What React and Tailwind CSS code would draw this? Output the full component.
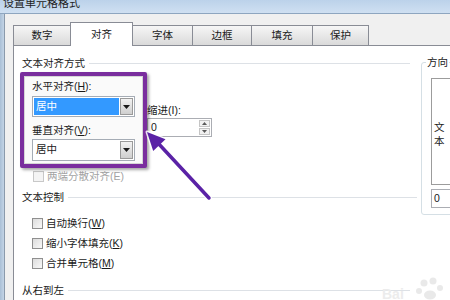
import React from 'react';

const FONT = "font-['Liberation_Sans','Noto_Sans_CJK_SC',sans-serif]";

const tabs = [
  { label: '数字', w: 'w-[57px]' },
  { label: '对齐', w: 'w-[63px]', active: true },
  { label: '字体', w: 'w-[59px]', noLeft: true },
  { label: '边框', w: 'w-[59px]' },
  { label: '填充', w: 'w-[61px]' },
  { label: '保护', w: 'w-[57px]', last: true },
];

function DownTri() {
  return (
    <svg width="7" height="4" viewBox="0 0 7 4">
      <path d="M0 0H7L3.5 4Z" fill="#1a1a1a" />
    </svg>
  );
}

function SpinTri({ up }) {
  return (
    <svg width="5" height="3" viewBox="0 0 5 3">
      <path d={up ? 'M0 3L2.5 0L5 3Z' : 'M0 0H5L2.5 3Z'} fill="#5a5a5a" />
    </svg>
  );
}

function Combo({ selected, className }) {
  return (
    <div className={`flex w-[103px] border border-[#a5acb5] bg-white p-[1px] ${className}`}>
      <div className={`flex flex-1 items-center pl-[2px] ${selected ? 'bg-[#3399ff] text-white' : 'text-[#1a1a1a]'}`}>居中</div>
      <div className="ml-[1px] flex w-[13px] items-center justify-center border border-[#9a9a9a] bg-linear-to-b from-[#f2f2f2] to-[#cfcfcf]">
        <DownTri />
      </div>
    </div>
  );
}

function Header({ text, className }) {
  return (
    <div className={`flex h-[14px] items-center leading-[14px] text-[#1a1a1a] ${className}`}>
      <span>{text}</span>
      <div className="ml-[4px] flex-1 border-t border-[#dde1e6]" />
    </div>
  );
}

function Check({ children, disabled, className }) {
  return (
    <div className={`ml-[10px] flex h-[14px] items-center gap-[3px] leading-[14px] ${className}`}>
      <div className={`h-[11px] w-[11px] border ${disabled ? 'border-[#c8c8c8] bg-[#f4f4f4]' : 'border-[#8f8f8f] bg-linear-to-br from-[#dcdcdc] to-[#f8f8f8]'}`} />
      <span className={disabled ? 'text-[#a3a3a3]' : 'text-[#1a1a1a]'}>{children}</span>
    </div>
  );
}

export default function App() {
  return (
    <div className={`relative flex h-[300px] w-[450px] flex-col overflow-hidden bg-[#f0f0f0] text-[10.5px] ${FONT}`}>
      {/* title bar */}
      <div className="h-[14px] shrink-0 overflow-hidden border-b border-[#8ea6c0] bg-linear-to-b from-[#bcd2ea] to-[#cfe0f2]">
        <div className="-mt-[3px] pl-[3px] text-[11px] leading-[12px] text-[#222]">设置单元格格式</div>
      </div>

      <div className="flex flex-1">
        <div className="w-[5px] shrink-0 border-r border-[#8a9aac] bg-linear-to-r from-[#a9bfd6] to-[#c3d4e6]" />

        <div className="flex min-w-0 flex-1 flex-col pl-[8px]">
          {/* tabs */}
          <div className="mt-[8px] flex h-[23px] shrink-0 items-end">
            {tabs.map((t) => (
              <div
                key={t.label}
                className={`flex shrink-0 items-center justify-center border-[#898c95] text-[#1a1a1a] ${t.w} ${
                  t.active
                    ? 'relative z-10 -mb-[1px] h-[24px] border-x border-t bg-white'
                    : `h-[20px] border-t bg-linear-to-b from-[#f6f6f6] to-[#dadada] ${t.noLeft ? '' : 'border-l'} ${t.last ? 'border-r' : ''}`
                }`}
              >
                {t.label}
              </div>
            ))}
          </div>

          {/* panel */}
          <div className="flex flex-1 border-l border-t border-[#898c95] bg-white">
            <div className="w-[407px] shrink-0 pl-[8px]">
              <Header text="文本对齐方式" className="mt-[10px] mr-[11px]" />

              <div className="mt-[2px] flex items-start">
                <div className="relative z-10 -ml-[2px] h-[96px] w-[127px] shrink-0 rounded-[2px] border-[4px] border-[#7a2e9e] bg-[#fafafa] pl-[8px] shadow-[inset_0_0_0_1px_#d6d6d6,2px_2px_3px_rgba(0,0,0,0.35)]">
                  <div className="mt-[3px] h-[14px] leading-[14px] text-[#1a1a1a]">
                    水平对齐(<span className="underline">H</span>):
                  </div>
                  <Combo selected className="mt-[3px] h-[21px]" />
                  <div className="mt-[6px] h-[14px] leading-[14px] text-[#1a1a1a]">
                    垂直对齐(<span className="underline">V</span>):
                  </div>
                  <Combo className="mt-[2px] h-[22px]" />
                </div>

                <div className="mt-[31px] flex flex-col">
                  <div className="h-[14px] leading-[14px] text-[#1a1a1a]">缩进(I):</div>
                  <div className="mt-[1px] flex h-[19px] w-[65px] items-center border border-[#abadb3] bg-white pl-[3px] pr-[1px]">
                    <span className="flex-1 text-[#1a1a1a]">0</span>
                    <div className="flex h-[15px] w-[11px] flex-col gap-[1px]">
                      <div className="flex flex-1 items-center justify-center border border-[#c5c5c5] bg-[#f1f1f1]">
                        <SpinTri up />
                      </div>
                      <div className="flex flex-1 items-center justify-center border border-[#c5c5c5] bg-[#f1f1f1]">
                        <SpinTri />
                      </div>
                    </div>
                  </div>
                </div>
              </div>

              <Check disabled className="mt-[1px] ml-[11px]">两端分散对齐(E)</Check>

              <Header text="文本控制" className="mt-[7px] mr-[4px]" />

              <Check className="mt-[12px]">
                自动换行(<span className="underline">W</span>)
              </Check>
              <Check className="mt-[6px]">
                缩小字体填充(<span className="underline">K</span>)
              </Check>
              <Check className="mt-[6px]">
                合并单元格(<span className="underline">M</span>)
              </Check>

              <Header text="从右到左" className="mt-[13px] mr-[11px]" />
            </div>

            {/* orientation group */}
            <fieldset className="mt-[9px] h-fit w-[60px] shrink-0 rounded-[3px] border border-[#d5dfe5] pb-[6px]">
              <legend className="ml-[4px] px-[1px] leading-[14px] text-[#1a1a1a]">方向</legend>
              <div className="mt-[9px] ml-[9px] h-[107px] border border-[#9c9c9c] pt-[41px] pl-[2px] leading-[14px] text-[#1a1a1a]">
                <div>文</div>
                <div>本</div>
              </div>
              <div className="mt-[4px] ml-[9px] flex h-[19px] items-center border border-[#abadb3] pl-[2px] text-[#1a1a1a]">0</div>
            </fieldset>
          </div>
        </div>
      </div>

      {/* annotation arrow + watermark */}
      <svg className="pointer-events-none absolute inset-0 z-20" width="450" height="300" viewBox="0 0 450 300">
        <line x1="209" y1="198" x2="157" y2="142" stroke="#ffffff" strokeOpacity="0.85" strokeWidth="6" strokeLinecap="round" />
        <polygon points="147,132 165.5,139.3 153.2,151" fill="#ffffff" fillOpacity="0.85" stroke="#ffffff" strokeOpacity="0.85" strokeWidth="3" strokeLinejoin="round" />
        <line x1="209" y1="198" x2="157" y2="142" stroke="#5a22a6" strokeWidth="3.5" strokeLinecap="round" />
        <polygon points="147,132 165.5,139.3 153.2,151" fill="#5a22a6" />
        <g fill="#e9e9e9">
          <circle cx="424" cy="283" r="3.5" />
          <circle cx="433" cy="281" r="3.5" />
          <circle cx="440" cy="288" r="3" />
          <circle cx="419" cy="291" r="3" />
          <ellipse cx="430" cy="295" rx="6" ry="4.5" />
        </g>
      </svg>
      <div className="pointer-events-none absolute left-[382px] top-[284px] z-20 text-[14px] font-bold text-[#ececec]">Bai</div>
    </div>
  );
}
